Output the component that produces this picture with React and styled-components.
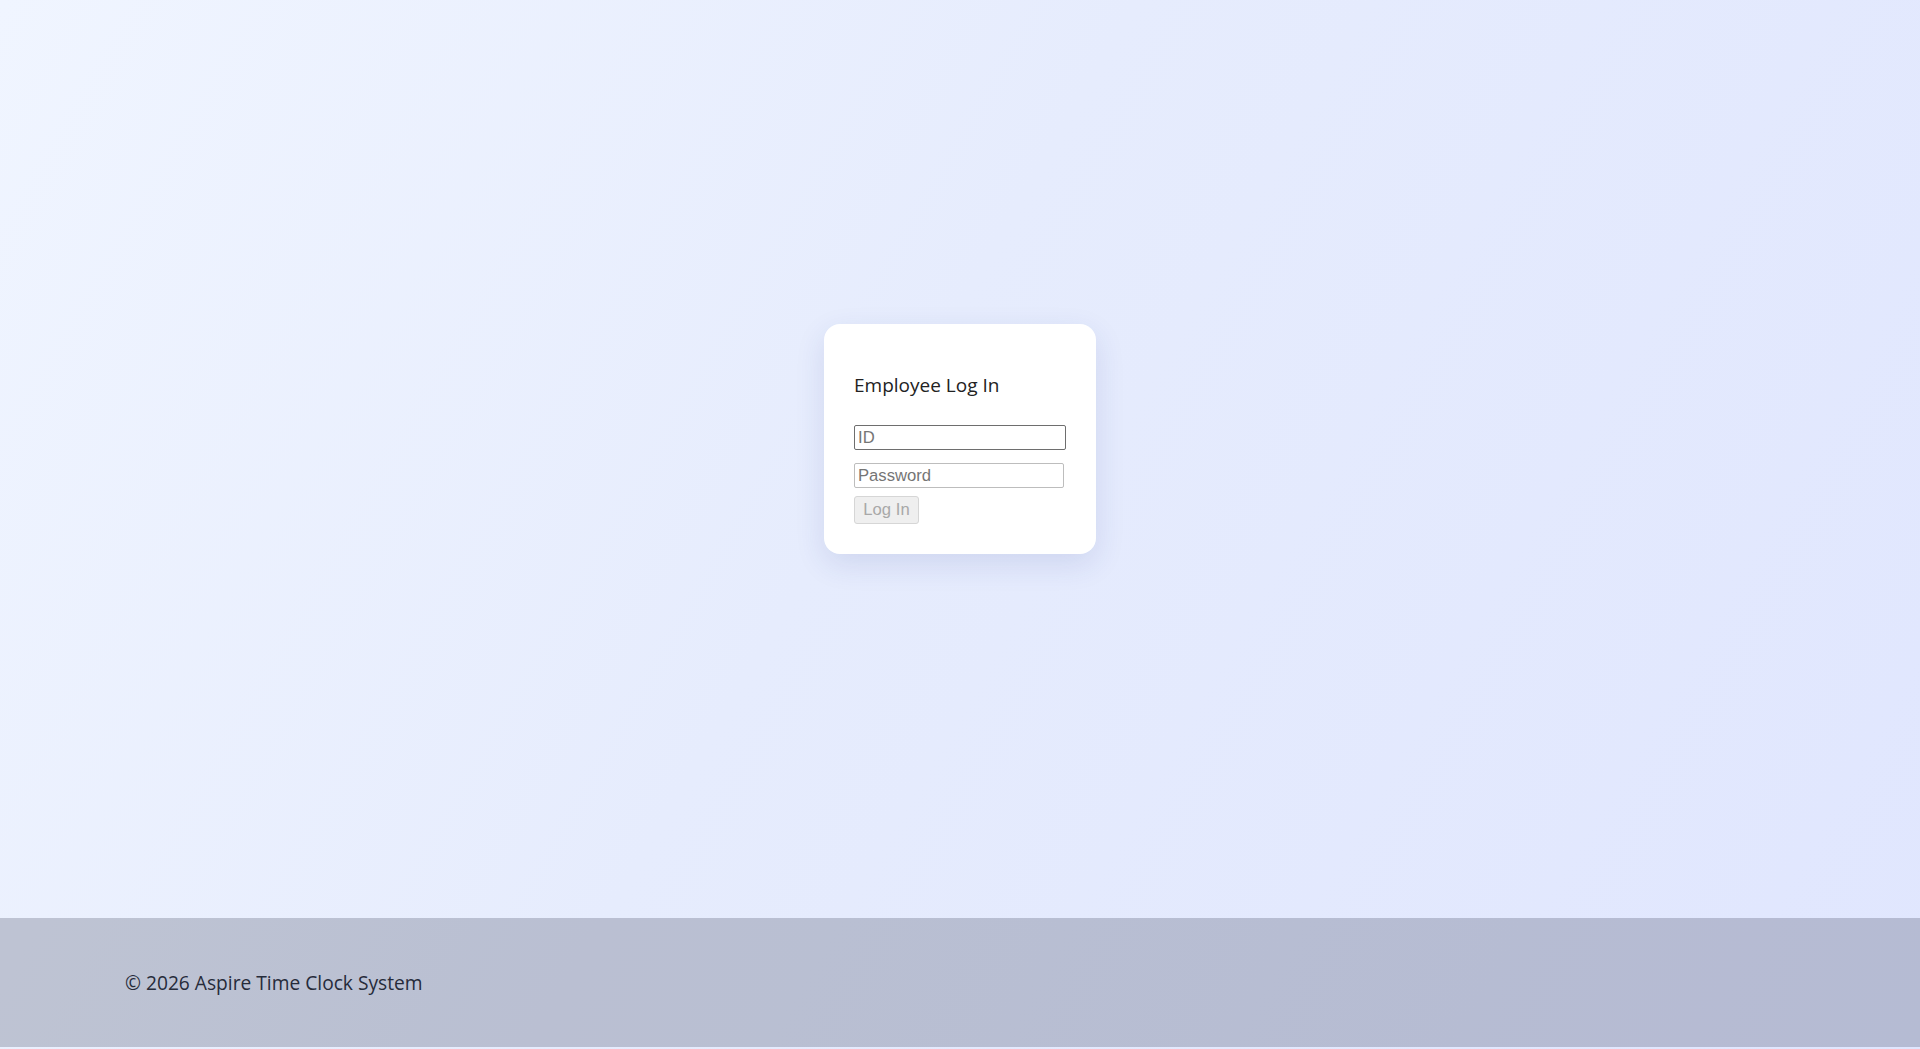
import React from 'react';
import styled, { createGlobalStyle } from 'styled-components';

const GlobalStyle = createGlobalStyle`
  html, body {
    margin: 0;
    padding: 0;
    height: 100%;
  }
  body {
    font-family: "Open Sans", "Noto Sans", sans-serif;
    background: linear-gradient(120deg, #f0f5ff 0%, #e6ecfd 45%, #e0e6fe 100%);
    background-attachment: fixed;
  }
  #root {
    min-height: 100%;
  }
`;

const Page = styled.div`
  display: flex;
  flex-direction: column;
  height: 1049px;
`;

const Main = styled.main`
  flex: 1;
  display: flex;
  align-items: center;
  justify-content: center;
  padding-bottom: 40px;
`;

const Card = styled.div`
  box-sizing: border-box;
  width: 272px;
  height: 230px;
  padding: 48px 30px 0;
  background: #fff;
  border-radius: 16px;
  box-shadow: 0 10px 30px rgba(40, 60, 140, 0.12);
`;

const Title = styled.h2`
  margin: 0 0 27px;
  font-size: 19px;
  font-weight: 400;
  line-height: 26px;
  color: #222;
`;

const Form = styled.form`
  display: flex;
  flex-direction: column;
  align-items: flex-start;
`;

const Input = styled.input`
  box-sizing: border-box;
  width: ${p => (p.$focused ? '212px' : '210px')};
  height: 25px;
  margin-bottom: ${p => p.$gap}px;
  padding: 1px 3px;
  font-family: "Liberation Sans", Arial, sans-serif;
  font-size: 16.67px;
  color: #222;
  border: ${p => (p.$focused ? '1.5px solid #6e6e6e' : '1px solid #bdbdbd')};
  border-radius: 2px;
  outline: none;
  background: #fff;

  &::placeholder {
    color: #757575;
  }
`;

const Button = styled.button`
  box-sizing: border-box;
  width: 65px;
  height: 28px;
  padding: 0;
  font-family: "Liberation Sans", Arial, sans-serif;
  font-size: 16.67px;
  color: #a8a8a8;
  background: #efefef;
  border: 1px solid #d6d6d6;
  border-radius: 3px;
`;

const Footer = styled.footer`
  box-sizing: border-box;
  height: 129px;
  margin-bottom: 2px;
  padding: 0 125px;
  display: flex;
  align-items: center;
  background: rgba(10, 15, 40, 0.2);
`;

const FooterText = styled.p`
  margin: 0;
  font-size: 19.2px;
  color: #262b3a;
`;

export default function App() {
  return (
    <>
      <GlobalStyle />
      <Page>
        <Main>
          <Card>
            <Title>Employee Log In</Title>
            <Form onSubmit={e => e.preventDefault()}>
              <Input type="text" placeholder="ID" $focused $gap={13} />
              <Input type="password" placeholder="Password" $gap={8} />
              <Button type="submit" disabled>Log In</Button>
            </Form>
          </Card>
        </Main>
        <Footer>
          <FooterText>© 2026 Aspire Time Clock System</FooterText>
        </Footer>
      </Page>
    </>
  );
}
